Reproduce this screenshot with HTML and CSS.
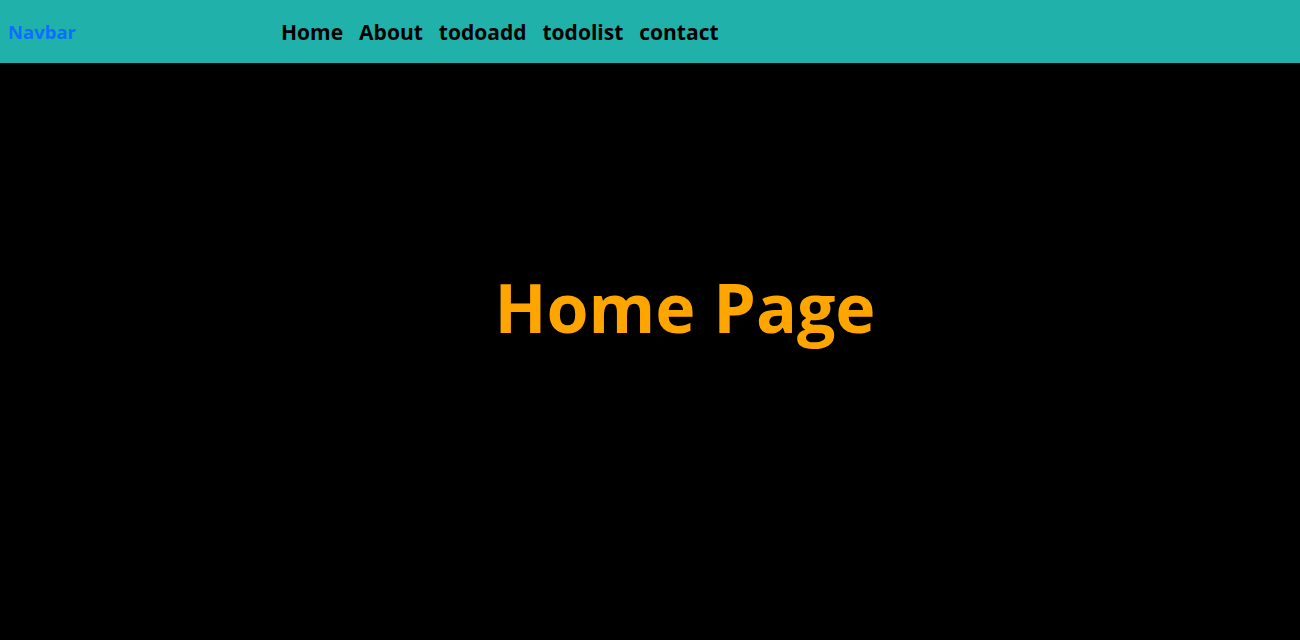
FILE: index.html
```html
<!DOCTYPE html>
<html>
<head>
<meta charset="utf-8">
<link rel="stylesheet" href="styles.css">
</head>
<body>
<nav class="navbar">
  <a class="brand" href="#">Navbar</a>
  <ul class="links">
    <li><a href="#">Home</a></li>
    <li><a href="#">About</a></li>
    <li><a href="#">todoadd</a></li>
    <li><a href="#">todolist</a></li>
    <li><a href="#">contact</a></li>
  </ul>
</nav>
<main class="home">
  <h1 class="title">Home Page</h1>
</main>
</body>
</html>
```
FILE: styles.css
```css
html, body {
  margin: 0;
  padding: 0;
  height: 100%;
}
body {
  background: #000;
  font-family: "Open Sans", "Noto Sans", sans-serif;
}
.navbar {
  height: 63px;
  background: #20b2aa;
  display: flex;
  align-items: center;
  padding-left: 8px;
}
.brand {
  color: #0d6efd;
  text-decoration: none;
  font-weight: 700;
  font-size: 18.5px;
  width: 273px;
}
.links {
  list-style: none;
  display: flex;
  gap: 16px;
  margin: 0;
  padding: 0;
}
.links a {
  color: #000;
  text-decoration: none;
  font-weight: 700;
  font-size: 21px;
}
.home {
  display: flex;
  justify-content: center;
  padding-left: 70px;
  padding-top: 203px;
}
.title {
  margin: 0;
  color: #ffa500;
  font-size: 68px;
  font-weight: 700;
  line-height: 1.2;
}
```
